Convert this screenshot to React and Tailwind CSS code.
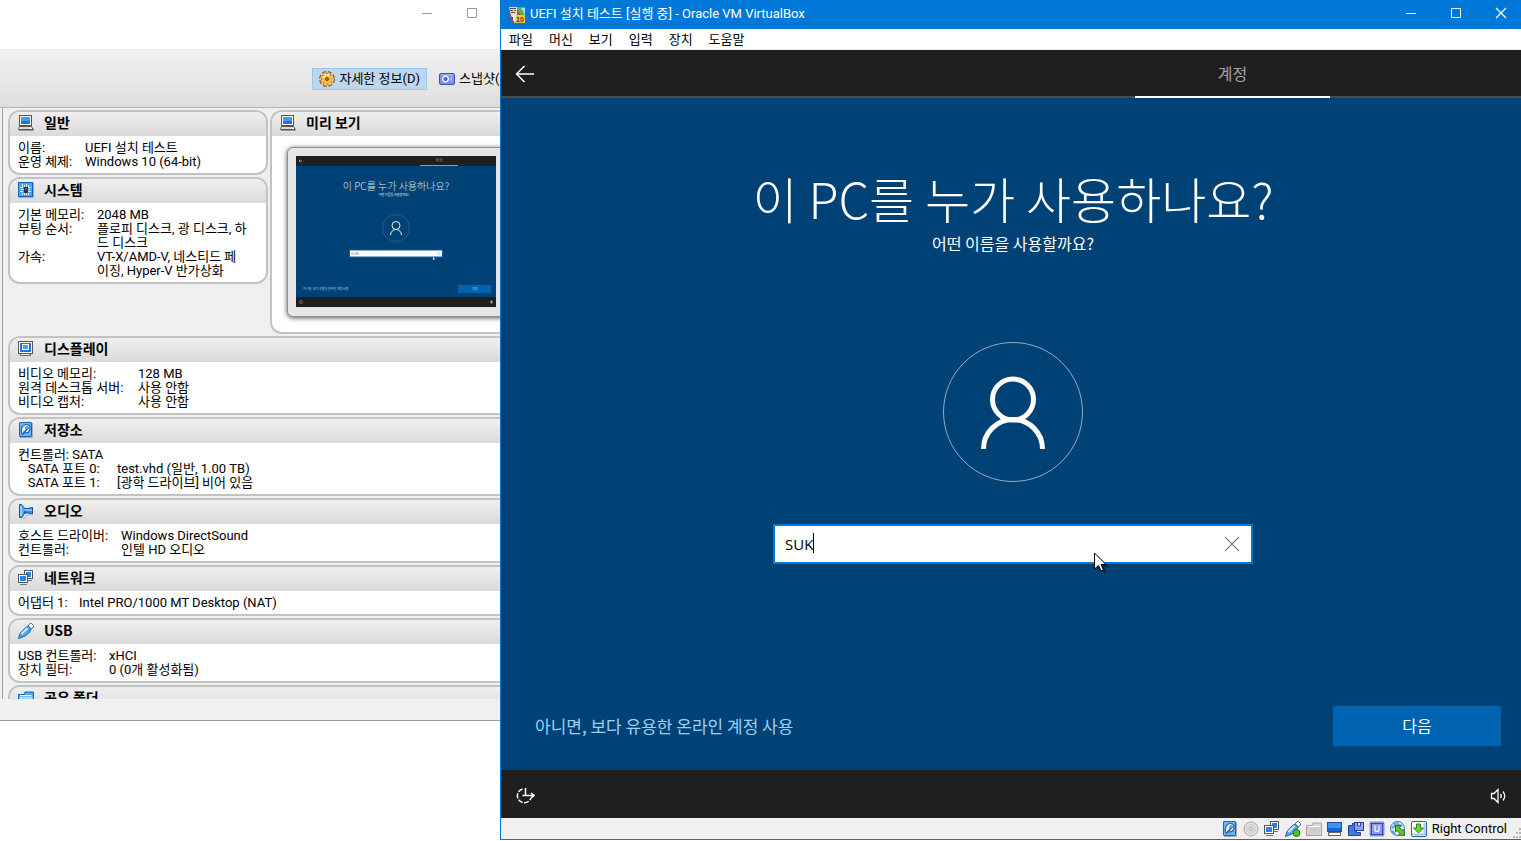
import { useState } from "react";

const KR = "font-['Noto_Sans_CJK_KR',sans-serif]";
const SYS = "font-['Roboto','Noto_Sans_CJK_KR',sans-serif]";
const UI = "font-['Open_Sans','Noto_Sans_CJK_KR',sans-serif]";

function Svg({ children, label }) {
  return (
    <svg viewBox="0 0 16 16" className="size-4 shrink-0" fill="none" role="img" aria-label={label}>
      {children}
    </svg>
  );
}

/* ---------- icons ---------- */

function LaptopIcon() {
  return (
    <Svg label="computer">
      <rect x="1.5" y="0.5" width="12" height="10" fill="#fff" stroke="#555" />
      <rect x="3" y="2" width="9" height="7" fill="#1b74e8" />
      <rect x="3" y="2" width="9" height="4" fill="#3c9cff" />
      <path d="M1.5 11.5h12l1.500 3H.5z" fill="#fff" stroke="#555" />
      <path d="M2.500 13h10" stroke="#b5b5b5" />
      <path d="M1 15.500h14.500v-2" stroke="#999" />
    </Svg>
  );
}

function ChipIcon() {
  return (
    <Svg label="system">
      <rect x="0.5" y="0.5" width="14" height="14" fill="#4da3f5" stroke="#1560c0" />
      <path d="M4.5 2v3M6.5 3v2M8.500 2v3M10.500 3v2M4.500 11v2M6.500 11v2M8.500 11v2M10.500 11v2M2 5.500h3M3 7.500h2M2 9.500h3M10 5.500h3M10 7.500h2M10 9.500h3" stroke="#d9efff" />
      <rect x="6" y="5" width="4" height="6" fill="#333" />
      <path d="M7 7h2" stroke="#888" />
      <path d="M1 15.500h14.500V1" stroke="#aaa" />
    </Svg>
  );
}

function MonitorIcon() {
  return (
    <Svg label="display">
      <rect x="0.5" y="0.5" width="14" height="12" fill="#fff" stroke="#555" />
      <rect x="2" y="2" width="11" height="9" fill="#1f74e6" />
      <rect x="4.5" y="3.500" width="6" height="5" fill="#4aa2ff" stroke="#fff" />
      <path d="M2 14h11" stroke="#666" strokeWidth="2" />
      <path d="M3 13.500h9" stroke="#eee" />
    </Svg>
  );
}

function DiskIcon() {
  return (
    <Svg label="hard disk">
      <rect x="1.5" y="0.5" width="12" height="14" rx="0.5" fill="#6bb8fa" stroke="#1a62b8" />
      <path d="M4 12.500C2 8 4 2.500 8.500 2.500c4 0 4.500 5 2 7.500-1.500 1.500-4 1-4.500-.5" fill="#e6f4ff" stroke="#1a62b8" strokeWidth="1.200" />
      <path d="m4.500 12.500 5-6" stroke="#1a62b8" strokeWidth="1.500" />
      <circle cx="9" cy="6" r="1.300" fill="#fff" stroke="#1a62b8" />
      <path d="M2 15.500h12.500V1" stroke="#aaa" />
    </Svg>
  );
}

function SpeakerIcon() {
  return (
    <Svg label="audio">
      <path d="M1.5 1.5h2L7 6v3.500L4 14.500H1.500z" fill="#55aaf2" stroke="#174f9c" />
      <path d="M7 5.500h3l4.500-1v6.500l-4.500-1H7z" fill="#3990e8" stroke="#174f9c" />
      <path d="M3 3v10" stroke="#a8dcff" strokeWidth="1.500" />
      <path d="M6 7h8" stroke="#8fd0ff" strokeWidth="1.500" />
      <path d="M5 15h2l2-3h6" stroke="#bbb" />
    </Svg>
  );
}

function NetworkIcon() {
  return (
    <Svg label="network">
      <rect x="6.5" y="0.5" width="8" height="8" fill="#fff" stroke="#555" />
      <rect x="8" y="2" width="5" height="5" fill="#2d83ec" />
      <path d="M9 10.500h5" stroke="#777" />
      <rect x="0.5" y="4.500" width="9" height="8" fill="#fff" stroke="#555" />
      <rect x="2" y="6" width="6" height="5" fill="#2d83ec" />
      <path d="M2 14.500h7" stroke="#777" />
    </Svg>
  );
}

function UsbIcon({ dot }) {
  return (
    <Svg label="usb">
      <path d="m10 3 2-2.500h1.500l2 2V4l-2.500 2z" fill="#fff" stroke="#666" />
      <path d="M.5 15.500 2 10.500 7.500 4.500 10.500 3l2.500 3-1.500 3.500L7 13z" fill="#4fa8f2" stroke="#1c61b5" />
      <path d="M3.500 11 9.500 5" stroke="#d0ecff" strokeWidth="2" />
      {dot && <circle cx="11.500" cy="12" r="3.500" fill="#4ec22c" stroke="#217a14" />}
    </Svg>
  );
}

function FolderIcon({ gray }) {
  return (
    <Svg label="shared folder">
      <path d="M.5 4.500H6l1-2.500h8.500v12.500H.5z" fill={gray ? "#d8d8d8" : "#4ba7f2"} stroke={gray ? "#a5a5a5" : "#1863b8"} />
      <path d="M1.500 6.500h13v7h-13z" fill={gray ? "#cfcfcf" : "#a6dcff"} />
      <path d="M2 5.500h11.500" stroke="#fff" />
    </Svg>
  );
}

function GearIcon() {
  return (
    <Svg label="details">
      <circle cx="8" cy="8" r="6" stroke="#8f5412" strokeWidth="4" strokeDasharray="3.200 1.500" />
      <circle cx="8" cy="8" r="5.500" fill="#f5b73c" stroke="#a4661b" />
      <circle cx="8" cy="8" r="5.500" stroke="#f9cd66" strokeWidth="2.500" strokeDasharray="2.600 1.720" />
      <path d="M4.500 7a4 4 0 0 1 6-2.500" stroke="#ffeab0" strokeWidth="1.500" />
      <circle cx="8" cy="8" r="1.500" fill="#a9783b" stroke="#7d4a10" />
    </Svg>
  );
}

function CameraIcon() {
  return (
    <Svg label="snapshots">
      <rect x="0.5" y="2.5" width="15" height="11" rx="1.5" fill="#7d93ea" stroke="#3c50b4" />
      <path d="M2 4h12" stroke="#b9c6ff" />
      <circle cx="6.500" cy="8" r="3" fill="#dfe6ff" stroke="#fff" />
      <circle cx="6.500" cy="8" r="1.500" fill="#5f77d8" stroke="#2f429f" />
      <path d="M12 6v4" stroke="#a9b8fa" strokeWidth="2" />
    </Svg>
  );
}

function CdIcon() {
  return (
    <Svg label="optical disc">
      <circle cx="8" cy="8" r="7" fill="#e2e2e2" stroke="#a9a9a9" />
      <circle cx="8" cy="8" r="4.500" stroke="#c9c9c9" />
      <circle cx="8" cy="8" r="2" fill="#fff" stroke="#aaa" />
      <circle cx="8" cy="8" r="0.800" fill="#999" />
    </Svg>
  );
}

function ScreenIcon() {
  return (
    <Svg label="display status">
      <rect x="0.5" y="1.5" width="14" height="9" fill="#3a94f2" stroke="#1b4fa8" />
      <path d="M1 7h13v3H1z" fill="#1767d8" />
      <rect x="1.5" y="11.5" width="12" height="3" fill="#fff" stroke="#666" />
    </Svg>
  );
}

function CaptureIcon() {
  return (
    <Svg label="capture">
      <path d="M.5 4.500h4v-2h4v9h4v3H.5z" fill="#3a7be0" stroke="#26418f" />
      <rect x="6.5" y="1.500" width="9" height="8" fill="#8ea4ef" stroke="#2c3f98" />
      <path d="M9.500 2v3h3V2" fill="#dfe5ff" stroke="#2c3f98" />
    </Svg>
  );
}

function CpuIcon() {
  return (
    <Svg label="virtualization">
      <rect x="1.5" y="1.5" width="13" height="13" stroke="#2d39ab" strokeWidth="2" strokeDasharray="1 1" />
      <rect x="2.5" y="2.5" width="11" height="11" fill="#8f9cf0" stroke="#3643b8" />
      <path d="M6 4.500v4a2 2 0 0 0 4 0v-4" stroke="#fff" strokeWidth="1.200" />
    </Svg>
  );
}

function MouseIcon() {
  return (
    <Svg label="mouse integration">
      <circle cx="7.500" cy="7.500" r="7" fill="#dff0ff" stroke="#3b76b4" />
      <path d="M4 2c3 1 0 4-2.500 5M8 1c-2 3 2 4 4 3M2 10l3 3" stroke="#4f9de0" strokeWidth="2" />
      <path d="m5.500 4.500 5.500.5-1.500 1.500 2.500 3 2-1.500.5 6.500-6-.5 1.500-1.500-3-3-1.500 1.500z" fill="#62c52f" stroke="#23700f" />
    </Svg>
  );
}

function HostKeyIcon() {
  return (
    <Svg label="host key">
      <rect x="0.5" y="0.5" width="15" height="15" rx="1.500" fill="#fff" stroke="#2a5f9e" />
      <path d="M1 13.500h14M13.500 2v12" stroke="#a8c6e6" strokeWidth="2" />
      <path d="M5.500 3h4v4h3l-5 5-5-5h3z" fill="#68d82b" stroke="#2a7d12" />
    </Svg>
  );
}

function AppIcon() {
  return (
    <Svg label="Windows 10 machine">
      <path d="M0 0h8v10H2z" fill="#e9dcc8" />
      <path d="M1 1.500h6M1 3.500h3M5 3.500h2M2 5.500h4" stroke="#5b4636" />
      <path d="M8 0h8v9H8z" fill="#53b848" />
      <path d="M8 2l4 6-4 2z" fill="#d94b2b" />
      <path d="M12 1h4v7z" fill="#a3dcf5" />
      <path d="M1 6l4 9H2z" fill="#c4382c" />
      <path d="M5 8h11v8H5z" fill="#f2c14a" />
      <path d="M4 7h4l-2 7H4z" fill="#e8f0f8" />
      <text x="7" y="15" fontSize="7" fontWeight="700" fill="#5a3a10" fontFamily="Liberation Sans">10</text>
    </Svg>
  );
}

/* ---------- manager window ---------- */

function Panel({ icon, title, children, open, className = "" }) {
  const edge = open ? "rounded-l-xl border-r-0" : "rounded-xl";
  return (
    <section className={`overflow-hidden border-2 border-[#c3c3c3] bg-white ${edge} ${className}`}>
      <h2 className={`flex h-6 items-center gap-2.5 bg-linear-to-b from-[#efefef] to-[#dadada] pb-[3px] pl-2 text-[14px] leading-[14px] font-bold ${KR}`}>
        {icon}
        <span className="pb-0.5">{title}</span>
      </h2>
      {children}
    </section>
  );
}

function Rows({ cols, rows }) {
  return (
    <dl className="px-2 pt-[5px] pb-1 text-[13px] leading-[14px] whitespace-nowrap">
      {rows.map(([label, ...lines]) => (
        <div key={label} className={`grid ${cols}`}>
          <dt className="whitespace-pre">{label}</dt>
          <dd>
            {lines.map((line) => (
              <div key={line}>{line}</div>
            ))}
          </dd>
        </div>
      ))}
    </dl>
  );
}

function Preview() {
  return (
    <div className="mt-[11px] ml-[15px] w-[220px] rounded-md border border-[#8f8f8f] bg-[#e6e6e6] p-2 pb-[9px] shadow-[0_1px_5px_#555]">
      <svg viewBox="0 0 200 151" className="block w-[200px]" role="img" aria-label="미리 보기" fontFamily="'Noto Sans CJK KR'">
        <rect width="200" height="151" fill="#004275" />
        <rect width="200" height="10" fill="#1f1f1f" />
        <path d="M124 9.500h38" stroke="#7f9fb8" />
        <path d="M3 5h3M4.500 3.500 3 5l1.500 1.500" stroke="#ccc" strokeWidth="0.600" fill="none" />
        <text x="143" y="6" fontSize="4" fill="#888" textAnchor="middle">계정</text>
        <text x="100" y="34" fontSize="10" fontWeight="300" fill="#dfe8ef" textAnchor="middle">이 PC를 누가 사용하나요?</text>
        <text x="98" y="40" fontSize="3" fill="#e5edf4" textAnchor="middle">어떤 이름을 사용할까요?</text>
        <circle cx="100" cy="72" r="13.500" stroke="#3f6f96" strokeWidth="0.600" fill="none" />
        <circle cx="100" cy="69.500" r="4" stroke="#eee" fill="none" />
        <path d="M94.500 79a5.500 5.500 0 0 1 11 0" stroke="#eee" fill="none" />
        <rect x="53.500" y="94" width="93" height="7" fill="#fff" stroke="#0063b1" />
        <text x="55" y="99" fontSize="4" fill="#777">SUK</text>
        <path d="m141 96 3 3m0-3-3 3" stroke="#aaa" strokeWidth="0.500" />
        <path d="m137 101 2 2-2 1z" fill="#fff" />
        <text x="7" y="134" fontSize="3" fill="#a9cce6">아니면, 보다 유용한 온라인 계정 사용</text>
        <rect x="162" y="129" width="33" height="8" fill="#0063b1" />
        <text x="179" y="134" fontSize="3" fill="#cde" textAnchor="middle">다음</text>
        <rect y="141" width="200" height="10" fill="#1f1f1f" />
        <circle cx="5" cy="146" r="1.500" stroke="#999" strokeWidth="0.600" fill="none" />
        <path d="M194 146h3m-1.500-1.500v3" stroke="#aaa" />
      </svg>
    </div>
  );
}

function ManagerWindow() {
  return (
    <div className={`flex h-[721px] w-[500px] shrink-0 flex-col overflow-hidden border-b border-[#a0a0a0] bg-[#f0f0f0] text-black ${SYS}`}>
      <header className="flex h-[49px] items-start justify-end bg-white pr-[22px] text-[#999]">
        <button aria-label="최소화" className="mr-[33px] flex h-[26px] items-center">
          <svg width="12" height="10" fill="none"><path d="M1 5.500h10" stroke="currentColor" /></svg>
        </button>
        <button aria-label="최대화" className="flex h-[26px] items-center">
          <svg width="12" height="10" fill="none"><path d="M1.500.5h9v9h-9z" stroke="currentColor" /></svg>
        </button>
      </header>
      <div className="flex h-[59px] shrink-0 items-center justify-end gap-3 overflow-hidden border-y border-t-[#ececec] border-b-[#b4b4b4] bg-linear-to-b from-[#f1f1f1] to-[#dedede] text-[13px] leading-4 whitespace-nowrap">
        <button className="flex h-[22px] shrink-0 items-center gap-1 border border-[#90c8f6] bg-[#bcd8ef] px-1.5">
          <GearIcon />
          자세한 정보(D)
        </button>
        <button className="flex w-[61px] shrink-0 items-center gap-1">
          <CameraIcon />
          스냅샷(
        </button>
      </div>
      <main className="ml-0.5 min-h-0 flex-1 overflow-hidden border-l border-[#a0a0a0] bg-[#efefef] pt-0.5 pl-[5px]">
        <div className="flex h-[226px] gap-0.5">
          <div className="flex w-[260px] shrink-0 flex-col gap-0.5">
            <Panel icon={<LaptopIcon />} title="일반">
              <Rows
                cols="grid-cols-[67px_1fr]"
                rows={[
                  ["이름:", "UEFI 설치 테스트"],
                  ["운영 체제:", "Windows 10 (64-bit)"],
                ]}
              />
            </Panel>
            <Panel icon={<ChipIcon />} title="시스템">
              <Rows
                cols="grid-cols-[79px_1fr]"
                rows={[
                  ["기본 메모리:", "2048 MB"],
                  ["부팅 순서:", "플로피 디스크, 광 디스크, 하", "드 디스크"],
                  ["가속:", "VT-X/AMD-V, 네스티드 페", "이징, Hyper-V 반가상화"],
                ]}
              />
            </Panel>
          </div>
          <Panel icon={<LaptopIcon />} title="미리 보기" open className="h-[224px] flex-1">
            <Preview />
          </Panel>
        </div>
        <div className="flex flex-col gap-0.5">
          <Panel icon={<MonitorIcon />} title="디스플레이" open>
            <Rows
              cols="grid-cols-[120px_1fr]"
              rows={[
                ["비디오 메모리:", "128 MB"],
                ["원격 데스크톱 서버:", "사용 안함"],
                ["비디오 캡처:", "사용 안함"],
              ]}
            />
          </Panel>
          <Panel icon={<DiskIcon />} title="저장소" open>
            <Rows
              cols="grid-cols-[99px_1fr]"
              rows={[
                ["컨트롤러: SATA", ""],
                ["   SATA 포트 0:", "test.vhd (일반, 1.00 TB)"],
                ["   SATA 포트 1:", "[광학 드라이브] 비어 있음"],
              ]}
            />
          </Panel>
          <Panel icon={<SpeakerIcon />} title="오디오" open>
            <Rows
              cols="grid-cols-[103px_1fr]"
              rows={[
                ["호스트 드라이버:", "Windows DirectSound"],
                ["컨트롤러:", "인텔 HD 오디오"],
              ]}
            />
          </Panel>
          <Panel icon={<NetworkIcon />} title="네트워크" open>
            <Rows cols="grid-cols-[61px_1fr]" rows={[["어댑터 1:", "Intel PRO/1000 MT Desktop (NAT)"]]} />
          </Panel>
          <Panel icon={<UsbIcon />} title="USB" open>
            <Rows
              cols="grid-cols-[91px_1fr]"
              rows={[
                ["USB 컨트롤러:", "xHCI"],
                ["장치 필터:", "0 (0개 활성화됨)"],
              ]}
            />
          </Panel>
          <Panel icon={<FolderIcon />} title="공유 폴더" open />
        </div>
      </main>
      <footer className="h-[21px] shrink-0" />
    </div>
  );
}

/* ---------- virtual machine window ---------- */

const MENUS = ["파일", "머신", "보기", "입력", "장치", "도움말"];

function TitleBar() {
  return (
    <header className={`flex h-[29px] shrink-0 items-center bg-[#0078d7] pl-2 text-[13px] leading-4 text-white ${SYS}`}>
      <AppIcon />
      <h1 className="ml-[5px] flex-1 pb-0.5 whitespace-nowrap">UEFI 설치 테스트 [실행 중] - Oracle VM VirtualBox</h1>
      <div className="flex items-center gap-[33px] pr-[14px] pb-[3px]">
        <button aria-label="최소화">
          <svg width="12" height="12" fill="none"><path d="M1 6.500h10" stroke="#fff" /></svg>
        </button>
        <button aria-label="최대화">
          <svg width="12" height="12" fill="none"><path d="M1.500 1.500h9v9h-9z" stroke="#fff" /></svg>
        </button>
        <button aria-label="닫기">
          <svg width="12" height="12" fill="none"><path d="m1 1 10 10M11 1 1 11" stroke="#fff" strokeWidth="1.200" /></svg>
        </button>
      </div>
    </header>
  );
}

function AccountSetup() {
  const [name, setName] = useState("SUK");

  return (
    <main className="flex min-h-0 flex-1 flex-col bg-[#004275] text-white">
      <div className="flex flex-1 flex-col items-center pt-[72px] pl-1">
        <h2 className="text-[49px] leading-[56px] font-light whitespace-nowrap">이 PC를 누가 사용하나요?</h2>
        <label htmlFor="username" className="mt-[5px] text-[16px] leading-6">어떤 이름을 사용할까요?</label>
        <svg viewBox="0 0 140 140" className="mt-[87px] size-[140px] shrink-0" fill="none" role="img" aria-label="사용자">
          <circle cx="70" cy="70" r="69.500" stroke="#8fadc4" />
          <circle cx="70" cy="57.500" r="20.500" stroke="#fff" strokeWidth="5" />
          <path d="M40.500 107a29.500 29.500 0 0 1 59 0" stroke="#fff" strokeWidth="5" />
        </svg>
        <div className={`relative mt-[42px] flex h-10 w-[480px] items-center border-2 border-[#0078d7] bg-white text-black ${UI}`}>
          <input
            id="username"
            value={name}
            onChange={(e) => setName(e.target.value)}
            className="h-full min-w-0 flex-1 px-2.5 text-[15px] outline-none"
          />
          <span className="absolute top-[7px] left-[38px] h-5 w-px bg-black" />
          <button aria-label="지우기" className="mr-3" onClick={() => setName("")}>
            <svg width="14" height="14" fill="none" className="block"><path d="m0 0 14 14M14 0 0 14" stroke="#777" strokeWidth="1.200" /></svg>
          </button>
          <svg width="18" height="24" className="absolute top-[26px] left-[319px]">
            <path d="M2 2v16l4-3.500 2.500 5.500 2.500-1-2.500-5.500H14z" fill="#000" opacity=".35" transform="translate(1.500 1.500)" />
            <path d="M.5 1v16l4-3.500L7 19l2.500-1L7 12.500h5z" fill="#fff" stroke="#000" />
          </svg>
        </div>
      </div>
      <div className="flex items-center justify-between pr-5 pb-6 pl-[34px]">
        <a href="#online" className="text-[17px] leading-6 text-[#99d1f7]">아니면, 보다 유용한 온라인 계정 사용</a>
        <button className="h-10 w-[168px] bg-[#0063b1] pb-0.5 text-[16px]">다음</button>
      </div>
    </main>
  );
}

function StatusBar() {
  return (
    <footer className={`flex h-[21px] shrink-0 items-center justify-end gap-[5px] bg-[#f0f0f0] text-[13px] leading-4 text-black ${SYS}`}>
      <DiskIcon />
      <CdIcon />
      <NetworkIcon />
      <UsbIcon dot />
      <FolderIcon gray />
      <ScreenIcon />
      <CaptureIcon />
      <CpuIcon />
      <MouseIcon />
      <HostKeyIcon />
      <span className="whitespace-nowrap">Right Control</span>
      <svg width="9" height="12" className="self-end" fill="#b5b5b5">
        <path d="M7 1h2v2H7zM4 5h2v2H4zM7 5h2v2H7zM1 9h2v2H1zM4 9h2v2H4zM7 9h2v2H7z" />
      </svg>
    </footer>
  );
}

function MachineWindow() {
  return (
    <div className={`flex h-[calc(100vh-1px)] min-h-[720px] min-w-0 flex-1 flex-col border-b border-l border-[#0078d7] ${KR}`}>
      <TitleBar />
      <nav className="flex h-[21px] shrink-0 items-center gap-4 border-b border-[#f0f0f0] bg-white pl-2 text-[13px] leading-4 text-black">
        {MENUS.map((menu) => (
          <button key={menu}>{menu}</button>
        ))}
      </nav>
      <div className="flex h-12 shrink-0 items-stretch justify-between bg-[#1f1f1f] shadow-[inset_0_-2px_#4c4c4c]">
        <button aria-label="뒤로" className="pl-[14px]">
          <svg width="20" height="18" fill="none" className="block"><path d="M1 9h18M9.500 1 1.500 9l8 8" stroke="#fff" strokeWidth="1.500" /></svg>
        </button>
        <button className="mr-[191px] w-[195px] border-b-2 border-white text-[16px] leading-6 text-[#a5a5a5]">계정</button>
      </div>
      <AccountSetup />
      <div className="flex h-12 shrink-0 items-center justify-between bg-[#1f1f1f] px-[14px] pt-1">
        <button aria-label="접근성">
          <svg width="20" height="18" fill="none" stroke="#fff" className="block">
            <path d="M7.500 2a7 7 0 1 0 8.500 9" strokeWidth="1.500" strokeDasharray="5 1.500" />
            <path d="M10.500 1v7.500M7.500 8.500H19M16 6l3 2.500-3 2.500" strokeWidth="1.500" />
          </svg>
        </button>
        <button aria-label="볼륨">
          <svg width="17" height="16" fill="none" stroke="#fff" className="block">
            <path d="M1.500 5.500h2.500l4-4v13l-4-4H1.500z" strokeWidth="1.300" />
            <path d="M10.500 6q1.500 2 0 4M13 3.500q3.500 4.500 0 9" strokeWidth="1.300" />
          </svg>
        </button>
      </div>
      <StatusBar />
    </div>
  );
}

export default function App() {
  return (
    <div className="flex min-h-screen items-start overflow-hidden bg-white">
      <ManagerWindow />
      <MachineWindow />
    </div>
  );
}
